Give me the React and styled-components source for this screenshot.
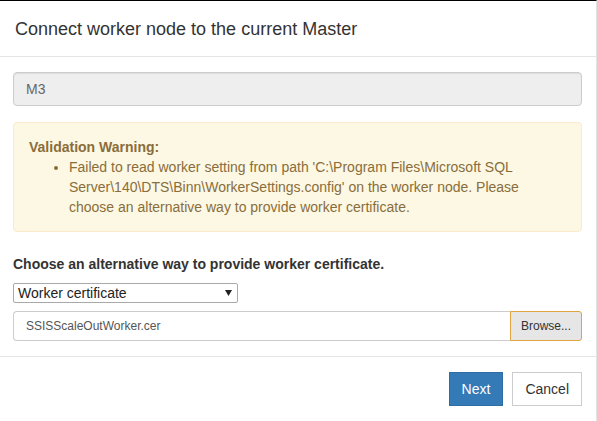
import React from "react";
import styled, { createGlobalStyle } from "styled-components";

const GlobalStyle = createGlobalStyle`
  html, body {
    margin: 0;
    padding: 0;
    background: #ffffff;
  }
  body {
    font-family: "Liberation Sans", Arial, Helvetica, sans-serif;
    font-size: 14px;
    line-height: 20px;
    color: #333333;
  }
  * {
    box-sizing: border-box;
  }
`;

export default function App() {
  return (
    <>
      <GlobalStyle />
      <Dialog>
        <Header>
          <Title>Connect worker node to the current Master</Title>
        </Header>
        <Body>
          <ReadOnlyInput>M3</ReadOnlyInput>
          <Alert>
            <AlertTitle>Validation Warning:</AlertTitle>
            <AlertList>
              <li>
                Failed to read worker setting from path 'C:\Program Files\Microsoft SQL
                Server\140\DTS\Binn\WorkerSettings.config' on the worker node. Please
                choose an alternative way to provide worker certificate.
              </li>
            </AlertList>
          </Alert>
          <Label>Choose an alternative way to provide worker certificate.</Label>
          <Select>
            <span>Worker certificate</span>
            <svg width="7" height="6" viewBox="0 0 7 6">
              <path d="M0 0 L7 0 L3.5 6 Z" fill="#222" />
            </svg>
          </Select>
          <FileRow>
            <FileName>SSISScaleOutWorker.cer</FileName>
            <BrowseButton>Browse...</BrowseButton>
          </FileRow>
        </Body>
        <Footer>
          <Button $primary>Next</Button>
          <Button>Cancel</Button>
        </Footer>
      </Dialog>
    </>
  );
}

const Dialog = styled.div`
  width: 597px;
  height: 421px;
  display: flex;
  flex-direction: column;
  border-top: 1px solid #000000;
  border-right: 1px solid #e3e3e3;
  background: #ffffff;
`;

const Header = styled.div`
  padding: 15px 15px 14px;
  border-bottom: 1px solid #e5e5e5;
`;

const Title = styled.h4`
  margin: 0;
  font-size: 18px;
  font-weight: normal;
  line-height: 26px;
  color: #333333;
`;

const Body = styled.div`
  padding: 15px 14px 15px 13px;
  display: flex;
  flex-direction: column;
`;

const ReadOnlyInput = styled.div`
  height: 34px;
  padding: 0 12px;
  display: flex;
  align-items: center;
  background: #eeeeee;
  border: 1px solid #cccccc;
  border-radius: 4px;
  color: #666666;
  font-size: 14px;
  box-shadow: inset 0 1px 1px rgba(0, 0, 0, 0.075);
`;

const Alert = styled.div`
  margin-top: 16px;
  padding: 14px 15px;
  background: #fcf8e3;
  border: 1px solid #faebcc;
  border-radius: 4px;
  color: #8a6d3b;
`;

const AlertTitle = styled.div`
  font-weight: bold;
`;

const AlertList = styled.ul`
  margin: 0;
  padding-left: 40px;
`;

const Label = styled.div`
  margin-top: 22px;
  font-weight: bold;
  color: #333333;
`;

const Select = styled.div`
  margin-top: 9px;
  width: 225px;
  height: 20px;
  padding: 0 5px 0 4px;
  display: flex;
  align-items: center;
  justify-content: space-between;
  border: 1px solid #a9a9a9;
  border-radius: 2px;
  color: #222222;
  font-size: 14px;
`;

const FileRow = styled.div`
  margin-top: 8px;
  height: 30px;
  display: flex;
`;

const FileName = styled.div`
  flex: 1;
  padding: 0 12px;
  display: flex;
  align-items: center;
  border: 1px solid #cccccc;
  border-right: none;
  border-radius: 4px 0 0 4px;
  font-size: 12px;
  color: #555555;
`;

const BrowseButton = styled.div`
  width: 72px;
  display: flex;
  align-items: center;
  justify-content: center;
  background: #e6e6e6;
  border: 1px solid #e2a443;
  border-radius: 0 3px 3px 0;
  font-size: 12px;
  color: #333333;
`;

const Footer = styled.div`
  border-top: 1px solid #e5e5e5;
  padding: 15px 14px 15px 15px;
  display: flex;
  justify-content: flex-end;
  gap: 9px;
`;

const Button = styled.div`
  height: 34px;
  padding: 0 12px;
  display: flex;
  align-items: center;
  font-size: 14px;
  border: 1px solid ${(p) => (p.$primary ? "#2e6da4" : "#cccccc")};
  background: ${(p) => (p.$primary ? "#337ab7" : "#ffffff")};
  color: ${(p) => (p.$primary ? "#ffffff" : "#333333")};
`;
